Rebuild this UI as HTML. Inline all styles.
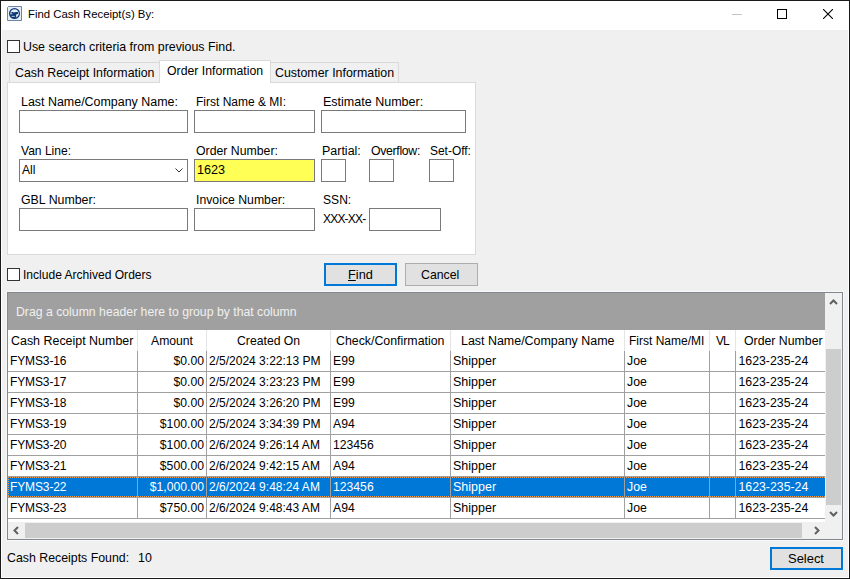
<!DOCTYPE html>
<html><head><meta charset="utf-8">
<style>
html,body{margin:0;padding:0;}
body{width:850px;height:579px;position:relative;overflow:hidden;background:#f0f0f0;font-family:"Liberation Sans",sans-serif;color:#000;}
.a{position:absolute;box-sizing:border-box;}
.t{position:absolute;white-space:nowrap;font-size:12px;line-height:14px;}
.inp{position:absolute;box-sizing:border-box;border:1px solid #7a7a7a;background:#fff;}
.cb{position:absolute;box-sizing:border-box;border:1px solid #333;background:#fff;width:13px;height:13px;}
.vl{position:absolute;width:1px;background:#a0a0a0;}
.hl{position:absolute;height:1px;background:#a0a0a0;left:8px;width:817px;}
.hs{position:absolute;width:1px;background:#e5e5e5;top:330px;height:21px;}
</style></head><body>
<div class="a" style="left:0;top:0;width:850px;height:579px;border:1px solid #1a1a1a;"></div>
<div class="a" style="left:1px;top:1px;width:848px;height:29px;background:#fff;"></div>
<div class="a" style="left:848px;top:30px;width:1px;height:548px;background:#fff;"></div>
<div class="a" style="left:1px;top:577px;width:848px;height:1px;background:#fff;"></div>
<div class="a" style="left:1px;top:30px;width:1px;height:548px;background:#fff;"></div>
<svg class="a" style="left:7px;top:6px" width="15" height="15" viewBox="0 0 15 15">
<path d="M1.5 0.5 H14.5 V14.5 H0.5 V1.5 Z" fill="#e9eef5" stroke="#6a84aa" stroke-width="1"/>
<defs><clipPath id="cc"><circle cx="7.5" cy="7.5" r="5"/></clipPath></defs>
<circle cx="7.5" cy="7.5" r="4.9" fill="none" stroke="#0b3a75" stroke-width="1.2"/>
<g clip-path="url(#cc)" fill="#0b3a75">
<path d="M1 6.9 L4.5 6.6 L5.5 5.8 L6.5 6.4 L9 6 L11 6.1 L11 7.8 L9 8.8 L9.3 10.2 L8.5 12.5 L2 12.5 Z"/>
<rect x="3" y="7.3" width="2.4" height="1" fill="#c9d4e3"/>
<rect x="4.6" y="9.9" width="3.2" height="0.9" fill="#c9d4e3"/>

</g>
</svg>
<div class="t" style="left:28px;top:7px;font-size:11.36px;">Find Cash Receipt(s) By:</div>
<div class="a" style="left:732px;top:14px;width:10px;height:1px;background:#c4c4c4;"></div>
<div class="a" style="left:777px;top:9px;width:10px;height:10px;border:1px solid #000;"></div>
<svg class="a" style="left:823px;top:9px" width="10" height="10" viewBox="0 0 10 10"><path d="M0 0 L10 10 M10 0 L0 10" stroke="#000" stroke-width="1.1"/></svg>
<div class="cb" style="left:7px;top:40px;"></div>
<div class="t" style="left:23px;top:40px;font-size:12.39px;">Use search criteria from previous Find.</div>
<div class="a" style="left:9px;top:62px;width:151px;height:21px;border:1px solid #d9d9d9;border-bottom:none;background:#f0f0f0;"></div>
<div class="a" style="left:270px;top:62px;width:129px;height:21px;border:1px solid #d9d9d9;border-bottom:none;background:#f0f0f0;"></div>
<div class="a" style="left:7px;top:82px;width:469px;height:173px;border:1px solid #d9d9d9;background:#fff;"></div>
<div class="a" style="left:159px;top:60px;width:112px;height:23px;border:1px solid #d9d9d9;border-bottom:none;background:#fff;"></div>
<div class="t" style="left:15px;top:66px;font-size:12.36px;">Cash Receipt Information</div>
<div class="t" style="left:167px;top:64px;font-size:12.28px;">Order Information</div>
<div class="t" style="left:275px;top:66px;font-size:12.4px;">Customer Information</div>
<div class="t" style="left:21px;top:95px;font-size:12.44px;">Last Name/Company Name:</div>
<div class="t" style="left:196px;top:95px;font-size:12.0px;">First Name &amp; MI:</div>
<div class="t" style="left:323px;top:95px;font-size:12.52px;">Estimate Number:</div>
<div class="t" style="left:21px;top:144px;font-size:12.05px;">Van Line:</div>
<div class="t" style="left:196px;top:144px;font-size:12.29px;">Order Number:</div>
<div class="t" style="left:322px;top:144px;font-size:12.48px;">Partial:</div>
<div class="t" style="left:430px;top:144px;font-size:11.94px;">Set-Off:</div>
<div class="t" style="left:21px;top:193px;font-size:12.35px;">GBL Number:</div>
<div class="t" style="left:196px;top:193px;font-size:12.26px;">Invoice Number:</div>
<div class="t" style="left:323px;top:193px;font-size:12.1px;">SSN:</div>
<div class="t" style="left:371px;top:144px;font-size:12.3px;letter-spacing:-0.33px;">Overflow:</div>
<div class="inp" style="left:19px;top:110px;width:169px;height:23px;"></div>
<div class="inp" style="left:194px;top:110px;width:121px;height:23px;"></div>
<div class="inp" style="left:321px;top:110px;width:145px;height:23px;"></div>
<div class="inp" style="left:19px;top:159px;width:169px;height:23px;"></div>
<svg class="a" style="left:175px;top:168px" width="8" height="6" viewBox="0 0 8 6"><path d="M0.5 0.5 L4 4 L7.5 0.5" fill="none" stroke="#333" stroke-width="1"/></svg>
<div class="inp" style="left:194px;top:159px;width:121px;height:23px;background:#ffff55;"></div>
<div class="inp" style="left:321px;top:159px;width:25px;height:23px;"></div>
<div class="inp" style="left:369px;top:159px;width:25px;height:23px;"></div>
<div class="inp" style="left:429px;top:159px;width:25px;height:23px;"></div>
<div class="inp" style="left:19px;top:208px;width:169px;height:23px;"></div>
<div class="inp" style="left:194px;top:208px;width:121px;height:23px;"></div>
<div class="inp" style="left:369px;top:208px;width:72px;height:23px;"></div>
<div class="t" style="left:22px;top:163px;font-size:12px;">All</div>
<div class="t" style="left:197px;top:163px;font-size:12.62px;">1623</div>
<div class="t" style="left:323px;top:212px;font-size:12px;letter-spacing:-0.8px;">XXX-XX-</div>
<div class="cb" style="left:7px;top:268px;"></div>
<div class="t" style="left:23px;top:268px;font-size:12.05px;">Include Archived Orders</div>
<div class="a" style="left:324px;top:263px;width:73px;height:23px;border:2px solid #0078d7;background:#e1e1e1;"></div>
<div class="a" style="left:405px;top:263px;width:73px;height:23px;border:1px solid #adadad;background:#e1e1e1;"></div>
<div class="t" style="left:348px;top:268px;font-size:12.76px;"><span style="text-decoration:underline">F</span>ind</div>
<div class="t" style="left:421px;top:268px;font-size:12.32px;">Cancel</div>
<div class="a" style="left:6px;top:291px;width:838px;height:250px;border:1px solid #f8f8f8;"></div>
<div class="a" style="left:7px;top:292px;width:836px;height:248px;border:1px solid #828790;background:#fff;"></div>
<div class="a" style="left:8px;top:293px;width:817px;height:37px;background:#a0a0a0;"></div>
<div class="t" style="left:16px;top:305px;font-size:12.25px;color:#f0f0f0;">Drag a column header here to group by that column</div>
<div class="hs" style="left:137px;"></div>
<div class="hs" style="left:206px;"></div>
<div class="hs" style="left:330px;"></div>
<div class="hs" style="left:450px;"></div>
<div class="hs" style="left:624px;"></div>
<div class="hs" style="left:709px;"></div>
<div class="hs" style="left:735px;"></div>
<div class="t" style="left:11px;top:334px;font-size:12.44px;">Cash Receipt Number</div>
<div class="t" style="left:151px;top:334px;font-size:12.2px;">Amount</div>
<div class="t" style="left:237px;top:334px;font-size:12.22px;">Created On</div>
<div class="t" style="left:336px;top:334px;font-size:12.35px;">Check/Confirmation</div>
<div class="t" style="left:461px;top:334px;font-size:12.45px;">Last Name/Company Name</div>
<div class="t" style="left:629px;top:334px;font-size:12.0px;">First Name/MI</div>
<div class="t" style="left:716px;top:334px;font-size:12px;letter-spacing:-1px;">VL</div>
<div class="t" style="left:744px;top:334px;font-size:12.3px;">Order Number</div>
<div class="hl" style="top:371px;"></div>
<div class="t" style="left:10px;top:354px;font-size:12px;letter-spacing:-0.12px;">FYMS3-16</div>
<div class="t" style="left:138px;top:354px;width:66px;text-align:right;font-size:12.22px;">$0.00</div>
<div class="t" style="left:209px;top:354px;font-size:12.02px;">2/5/2024 3:22:13 PM</div>
<div class="t" style="left:333px;top:354px;font-size:12.2px;">E99</div>
<div class="t" style="left:453px;top:354px;font-size:12.5px;">Shipper</div>
<div class="t" style="left:627px;top:354px;font-size:12.3px;">Joe</div>
<div class="t" style="left:738.5px;top:354px;font-size:12.3px;">1623-235-24</div>
<div class="hl" style="top:392px;"></div>
<div class="t" style="left:10px;top:375px;font-size:12px;letter-spacing:-0.12px;">FYMS3-17</div>
<div class="t" style="left:138px;top:375px;width:66px;text-align:right;font-size:12.22px;">$0.00</div>
<div class="t" style="left:209px;top:375px;font-size:12.02px;">2/5/2024 3:23:23 PM</div>
<div class="t" style="left:333px;top:375px;font-size:12.2px;">E99</div>
<div class="t" style="left:453px;top:375px;font-size:12.5px;">Shipper</div>
<div class="t" style="left:627px;top:375px;font-size:12.3px;">Joe</div>
<div class="t" style="left:738.5px;top:375px;font-size:12.3px;">1623-235-24</div>
<div class="hl" style="top:413px;"></div>
<div class="t" style="left:10px;top:396px;font-size:12px;letter-spacing:-0.12px;">FYMS3-18</div>
<div class="t" style="left:138px;top:396px;width:66px;text-align:right;font-size:12.22px;">$0.00</div>
<div class="t" style="left:209px;top:396px;font-size:12.02px;">2/5/2024 3:26:20 PM</div>
<div class="t" style="left:333px;top:396px;font-size:12.2px;">E99</div>
<div class="t" style="left:453px;top:396px;font-size:12.5px;">Shipper</div>
<div class="t" style="left:627px;top:396px;font-size:12.3px;">Joe</div>
<div class="t" style="left:738.5px;top:396px;font-size:12.3px;">1623-235-24</div>
<div class="hl" style="top:434px;"></div>
<div class="t" style="left:10px;top:417px;font-size:12px;letter-spacing:-0.12px;">FYMS3-19</div>
<div class="t" style="left:138px;top:417px;width:66px;text-align:right;font-size:12.22px;">$100.00</div>
<div class="t" style="left:209px;top:417px;font-size:12.02px;">2/5/2024 3:34:39 PM</div>
<div class="t" style="left:333px;top:417px;font-size:12.2px;">A94</div>
<div class="t" style="left:453px;top:417px;font-size:12.5px;">Shipper</div>
<div class="t" style="left:627px;top:417px;font-size:12.3px;">Joe</div>
<div class="t" style="left:738.5px;top:417px;font-size:12.3px;">1623-235-24</div>
<div class="hl" style="top:455px;"></div>
<div class="t" style="left:10px;top:438px;font-size:12px;letter-spacing:-0.12px;">FYMS3-20</div>
<div class="t" style="left:138px;top:438px;width:66px;text-align:right;font-size:12.22px;">$100.00</div>
<div class="t" style="left:209px;top:438px;font-size:12.02px;">2/6/2024 9:26:14 AM</div>
<div class="t" style="left:333px;top:438px;font-size:12.2px;">123456</div>
<div class="t" style="left:453px;top:438px;font-size:12.5px;">Shipper</div>
<div class="t" style="left:627px;top:438px;font-size:12.3px;">Joe</div>
<div class="t" style="left:738.5px;top:438px;font-size:12.3px;">1623-235-24</div>
<div class="hl" style="top:476px;"></div>
<div class="t" style="left:10px;top:459px;font-size:12px;letter-spacing:-0.12px;">FYMS3-21</div>
<div class="t" style="left:138px;top:459px;width:66px;text-align:right;font-size:12.22px;">$500.00</div>
<div class="t" style="left:209px;top:459px;font-size:12.02px;">2/6/2024 9:42:15 AM</div>
<div class="t" style="left:333px;top:459px;font-size:12.2px;">A94</div>
<div class="t" style="left:453px;top:459px;font-size:12.5px;">Shipper</div>
<div class="t" style="left:627px;top:459px;font-size:12.3px;">Joe</div>
<div class="t" style="left:738.5px;top:459px;font-size:12.3px;">1623-235-24</div>
<div class="a" style="left:8px;top:477px;width:817px;height:20px;background:#0078d7;"></div>
<div class="a" style="left:8px;top:477px;width:817px;height:1px;background:repeating-linear-gradient(90deg,#f0a050 0 1px,transparent 1px 2px);"></div>
<div class="a" style="left:8px;top:496px;width:817px;height:1px;background:repeating-linear-gradient(90deg,#f0a050 0 1px,transparent 1px 2px);"></div>
<div class="a" style="left:8px;top:477px;width:1px;height:20px;background:repeating-linear-gradient(180deg,#f0a050 0 1px,transparent 1px 2px);"></div>
<div class="hl" style="top:497px;"></div>
<div class="t" style="left:10px;top:480px;font-size:12px;color:#fff;letter-spacing:-0.12px;">FYMS3-22</div>
<div class="t" style="left:138px;top:480px;width:66px;text-align:right;font-size:12.22px;color:#fff;">$1,000.00</div>
<div class="t" style="left:209px;top:480px;font-size:12.02px;color:#fff;">2/6/2024 9:48:24 AM</div>
<div class="t" style="left:333px;top:480px;font-size:12.2px;color:#fff;">123456</div>
<div class="t" style="left:453px;top:480px;font-size:12.5px;color:#fff;">Shipper</div>
<div class="t" style="left:627px;top:480px;font-size:12.3px;color:#fff;">Joe</div>
<div class="t" style="left:738.5px;top:480px;font-size:12.3px;color:#fff;">1623-235-24</div>
<div class="hl" style="top:518px;"></div>
<div class="t" style="left:10px;top:501px;font-size:12px;letter-spacing:-0.12px;">FYMS3-23</div>
<div class="t" style="left:138px;top:501px;width:66px;text-align:right;font-size:12.22px;">$750.00</div>
<div class="t" style="left:209px;top:501px;font-size:12.02px;">2/6/2024 9:48:43 AM</div>
<div class="t" style="left:333px;top:501px;font-size:12.2px;">A94</div>
<div class="t" style="left:453px;top:501px;font-size:12.5px;">Shipper</div>
<div class="t" style="left:627px;top:501px;font-size:12.3px;">Joe</div>
<div class="t" style="left:738.5px;top:501px;font-size:12.3px;">1623-235-24</div>
<div class="vl" style="left:137px;top:351px;height:168px;"></div>
<div class="vl" style="left:206px;top:351px;height:168px;"></div>
<div class="vl" style="left:330px;top:351px;height:168px;"></div>
<div class="vl" style="left:450px;top:351px;height:168px;"></div>
<div class="vl" style="left:624px;top:351px;height:168px;"></div>
<div class="vl" style="left:709px;top:351px;height:168px;"></div>
<div class="vl" style="left:735px;top:351px;height:168px;"></div>
<div class="a" style="left:825px;top:293px;width:17px;height:246px;background:#f0f0f0;"></div>
<div class="a" style="left:826px;top:349px;width:15px;height:156px;background:#cdcdcd;"></div>
<div class="a" style="left:8px;top:522px;width:817px;height:17px;background:#f0f0f0;"></div>
<div class="a" style="left:25px;top:523px;width:777px;height:15px;background:#cdcdcd;"></div>
<svg class="a" style="left:829px;top:298px" width="9" height="8" viewBox="0 0 9 8"><path d="M1 6 L4.5 2.5 L8 6" fill="none" stroke="#606060" stroke-width="2"/></svg>
<svg class="a" style="left:829px;top:510px" width="9" height="8" viewBox="0 0 9 8"><path d="M1 2 L4.5 5.5 L8 2" fill="none" stroke="#606060" stroke-width="2"/></svg>
<svg class="a" style="left:12px;top:526px" width="8" height="9" viewBox="0 0 8 9"><path d="M6 1 L2.5 4.5 L6 8" fill="none" stroke="#606060" stroke-width="2"/></svg>
<svg class="a" style="left:813px;top:526px" width="8" height="9" viewBox="0 0 8 9"><path d="M2 1 L5.5 4.5 L2 8" fill="none" stroke="#606060" stroke-width="2"/></svg>
<div class="t" style="left:7px;top:551px;font-size:12.35px;">Cash Receipts Found:</div>
<div class="t" style="left:138px;top:551px;font-size:12.4px;">10</div>
<div class="a" style="left:770px;top:547px;width:73px;height:23px;border:2px solid #0078d7;background:#e1e1e1;"></div>
<div class="t" style="left:788px;top:552px;font-size:12.94px;">Select</div>
</body></html>
